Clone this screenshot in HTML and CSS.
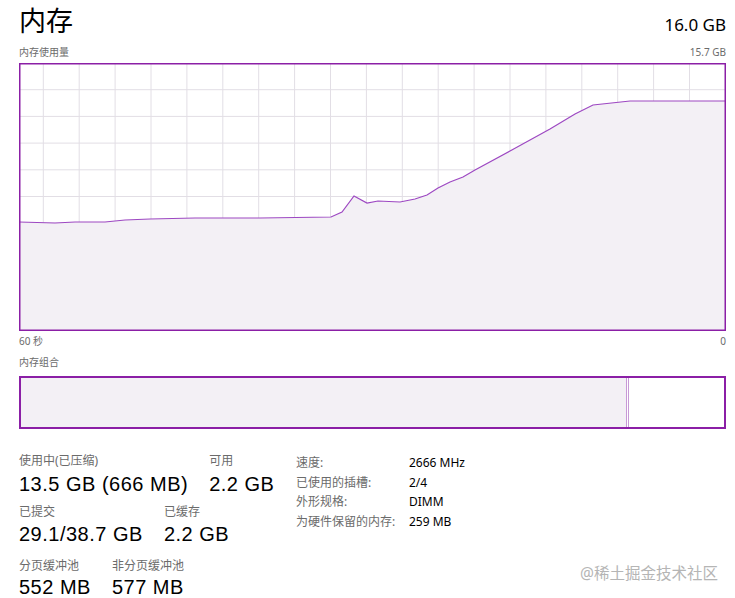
FILE: index.html
```html
<!DOCTYPE html>
<html lang="zh-CN">
<head>
    <meta charset="UTF-8">
    <meta name="viewport" content="width=device-width, initial-scale=1.0">
    <title>内存</title>
    <link rel="stylesheet" href="styles.css">
</head>
<body>
    <div class="panel">
        <div class="header">
            <h1>内存</h1>
            <span class="total">16.0 GB</span>
        </div>
        <div class="caption-row">
            <span>内存使用量</span>
            <span>15.7 GB</span>
        </div>

        <!-- usage graph, coordinates in chart pixels -->
        <svg class="usage-chart" width="707" height="268" viewBox="0 0 707 268">
            <g class="grid">
                <line x1="24.3" y1="0" x2="24.3" y2="268"/>
                <line x1="60.2" y1="0" x2="60.2" y2="268"/>
                <line x1="96.1" y1="0" x2="96.1" y2="268"/>
                <line x1="132" y1="0" x2="132" y2="268"/>
                <line x1="167.9" y1="0" x2="167.9" y2="268"/>
                <line x1="203.8" y1="0" x2="203.8" y2="268"/>
                <line x1="239.7" y1="0" x2="239.7" y2="268"/>
                <line x1="275.6" y1="0" x2="275.6" y2="268"/>
                <line x1="311.5" y1="0" x2="311.5" y2="268"/>
                <line x1="347.4" y1="0" x2="347.4" y2="268"/>
                <line x1="383.3" y1="0" x2="383.3" y2="268"/>
                <line x1="419.2" y1="0" x2="419.2" y2="268"/>
                <line x1="455.1" y1="0" x2="455.1" y2="268"/>
                <line x1="491" y1="0" x2="491" y2="268"/>
                <line x1="526.9" y1="0" x2="526.9" y2="268"/>
                <line x1="562.8" y1="0" x2="562.8" y2="268"/>
                <line x1="598.7" y1="0" x2="598.7" y2="268"/>
                <line x1="634.6" y1="0" x2="634.6" y2="268"/>
                <line x1="670.5" y1="0" x2="670.5" y2="268"/>
                <line x1="0" y1="26.7" x2="707" y2="26.7"/>
                <line x1="0" y1="53.4" x2="707" y2="53.4"/>
                <line x1="0" y1="80.1" x2="707" y2="80.1"/>
                <line x1="0" y1="106.8" x2="707" y2="106.8"/>
                <line x1="0" y1="133.5" x2="707" y2="133.5"/>
                <line x1="0" y1="160.2" x2="707" y2="160.2"/>
                <line x1="0" y1="186.9" x2="707" y2="186.9"/>
                <line x1="0" y1="213.6" x2="707" y2="213.6"/>
                <line x1="0" y1="240.3" x2="707" y2="240.3"/>
            </g>
            <polygon class="area" points="0,159 36,160 56,159 86,159 106,157 131,156 176,155 241,155 312,154 323,149 335,133 348,140 359,138 381,139 396,136 408,132 419,125 431,119 444,114 456,107 491,88 531,66 556,51 574,42 611,38 707,38 707,268 0,268"/>
            <polyline class="trace" points="0,159 36,160 56,159 86,159 106,157 131,156 176,155 241,155 312,154 323,149 335,133 348,140 359,138 381,139 396,136 408,132 419,125 431,119 444,114 456,107 491,88 531,66 556,51 574,42 611,38 707,38"/>
            <rect class="frame" x="0.75" y="0.75" width="705.5" height="266.5"/>
        </svg>

        <div class="caption-row axis">
            <span>60 秒</span>
            <span>0</span>
        </div>

        <div class="caption">内存组合</div>
        <div class="composition">
            <div class="in-use" style="width: 605px"></div>
            <div class="modified"></div>
        </div>

        <div class="details">
            <div class="stats">
                <div class="stat-row">
                    <div class="stat">
                        <div class="label">使用中(已压缩)</div>
                        <div class="value">13.5 GB (666 MB)</div>
                    </div>
                    <div class="stat">
                        <div class="label">可用</div>
                        <div class="value">2.2 GB</div>
                    </div>
                </div>
                <div class="stat-row">
                    <div class="stat">
                        <div class="label">已提交</div>
                        <div class="value">29.1/38.7 GB</div>
                    </div>
                    <div class="stat">
                        <div class="label">已缓存</div>
                        <div class="value">2.2 GB</div>
                    </div>
                </div>
                <div class="stat-row">
                    <div class="stat">
                        <div class="label">分页缓冲池</div>
                        <div class="value">552 MB</div>
                    </div>
                    <div class="stat">
                        <div class="label">非分页缓冲池</div>
                        <div class="value">577 MB</div>
                    </div>
                </div>
            </div>

            <dl class="specs">
                <dt>速度:</dt><dd>2666 MHz</dd>
                <dt>已使用的插槽:</dt><dd>2/4</dd>
                <dt>外形规格:</dt><dd>DIMM</dd>
                <dt>为硬件保留的内存:</dt><dd>259 MB</dd>
            </dl>
        </div>
    </div>

    <div class="watermark">@稀土掘金技术社区</div>
</body>
</html>
```

FILE: styles.css
```css
body {
    margin: 0;
    background-color: #ffffff;
    font-family: "Noto Sans", "Noto Sans CJK SC", sans-serif;
    color: #000000;
    position: relative;
}

.panel {
    padding: 0 9px 0 19px;
}

.header {
    display: flex;
    justify-content: space-between;
    align-items: baseline;
    height: 42px;
}

.header h1 {
    margin: 0;
    font-size: 27px;
    font-weight: normal;
    line-height: 42px;
}

.total {
    font-size: 17px;
}

.caption-row {
    display: flex;
    justify-content: space-between;
    font-size: 10px;
    line-height: 20px;
    color: #6b6b6b;
}

.caption {
    font-size: 10px;
    line-height: 20px;
    color: #6b6b6b;
}

.usage-chart {
    display: block;
    margin-top: 1px;
}

.grid line {
    stroke: #e2dee5;
    stroke-width: 1;
}

.area {
    fill: #f3f0f5;
}

.trace {
    fill: none;
    stroke: #9d48c2;
    stroke-width: 1.2;
}

.frame {
    fill: none;
    stroke: #8b1fa6;
    stroke-width: 1.5;
}

.axis {
    line-height: 20px;
    margin-bottom: 1px;
}

.composition {
    display: flex;
    height: 49px;
    margin-top: 4px;
    border: 2px solid #8b1fa6;
}

.in-use {
    background-color: #f3f0f5;
    border-right: 1px solid #c79ad6;
}

.modified {
    width: 1px;
    margin-left: 1px;
    background-color: #c79ad6;
}

.details {
    display: flex;
    align-items: flex-start;
    margin-top: 24px;
}

.stats {
    width: 277px;
}

.stat-row {
    display: flex;
    gap: 21px;
    margin-bottom: 9px;
}

.stat-row:nth-child(2) {
    margin-bottom: 13px;
}

.stat-row:last-child {
    margin-bottom: 0;
}

.label {
    font-size: 12px;
    line-height: 16px;
    color: #6b6b6b;
}

.value {
    margin-top: 3px;
    font-family: "Liberation Sans", "Noto Sans CJK SC", sans-serif;
    font-size: 20px;
    line-height: 22px;
    letter-spacing: 0.5px;
}

.stat-row:first-child .value {
    margin-top: 4px;
}

.stat-row:last-child .value {
    margin-top: 2px;
}

.specs {
    display: grid;
    grid-template-columns: 113px auto;
    align-content: start;
    margin: 0;
    font-size: 12px;
    line-height: 19.7px;
}

.specs dt {
    color: #6b6b6b;
}

.specs dd {
    margin: 0;
}

.watermark {
    position: absolute;
    left: 580px;
    top: 561px;
    font-size: 15.5px;
    color: #b5b5b5;
}
```
